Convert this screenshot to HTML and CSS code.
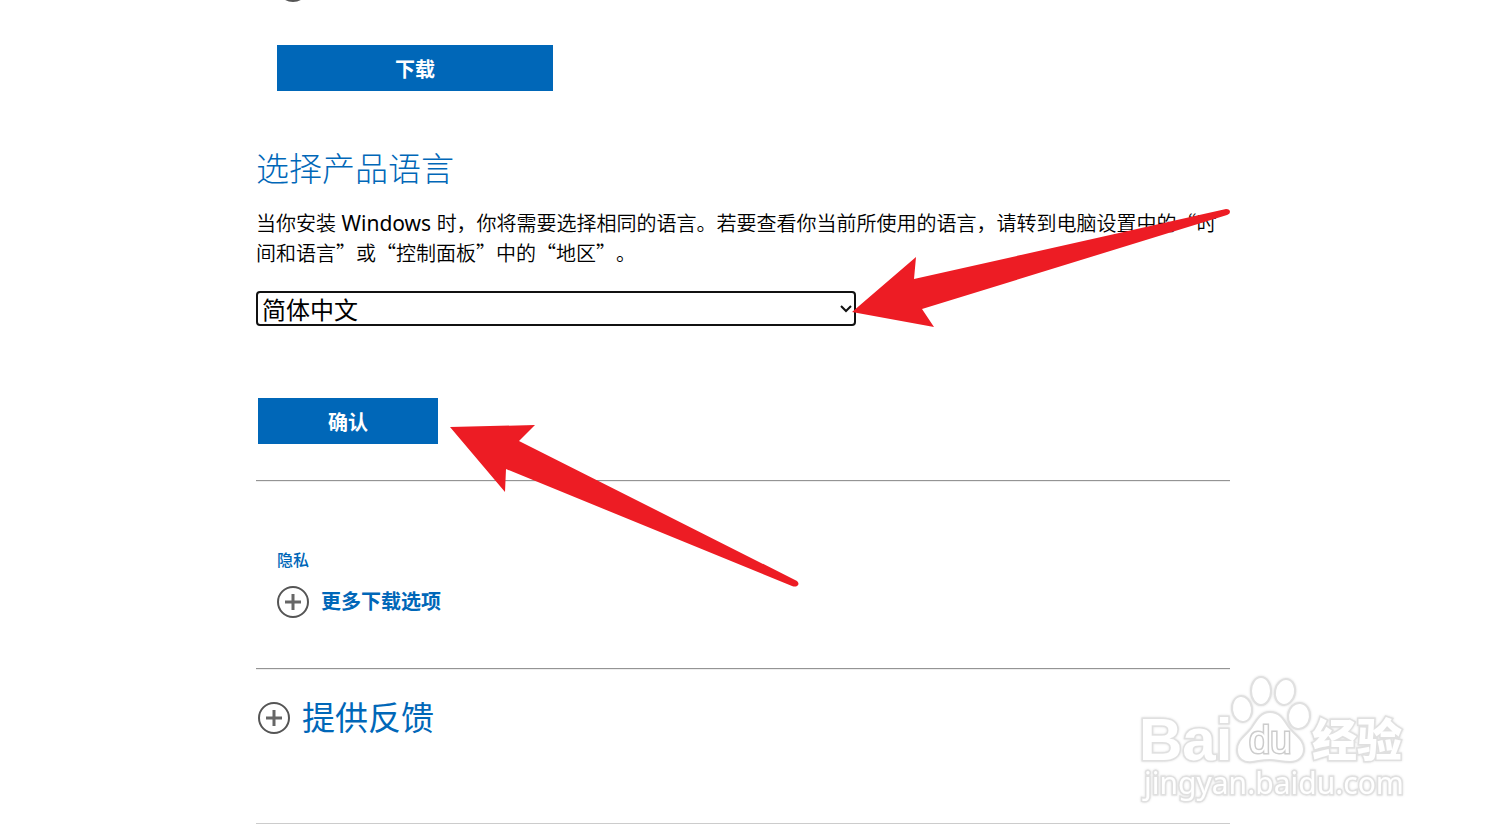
FILE: index.html
```
<!DOCTYPE html>
<html lang="zh-CN">

<head>
    <meta charset="UTF-8">
    <meta name="viewport" content="width=device-width, initial-scale=1.0">
    <title>选择产品语言</title>
    <link rel="stylesheet" href="styles.css">
</head>

<body>
    <main class="page">
        <section class="edition">
            <svg class="plus-icon" viewBox="0 0 32 32" aria-hidden="true">
                <circle cx="16" cy="16" r="15" />
                <path d="M16 8v16M8 16h16" />
            </svg>
            <button type="button" class="btn download-btn">下载</button>
        </section>

        <section class="language">
            <h2><label for="productLanguage">选择产品语言</label></h2>
            <p>当你安装<span class="latin"> Windows </span>时，你将需要选择相同的语言。若要查看你当前所使用的语言，请转到电脑设置中的“时间和语言”或“控制面板”中的“地区”。</p>
            <div class="select-box">
                <select id="productLanguage">
                    <option>简体中文</option>
                </select>
                <svg class="chevron" viewBox="0 0 12 8" aria-hidden="true">
                    <path d="M1 1l5 5l5 -5" />
                </svg>
            </div>
            <button type="button" class="btn confirm-btn">确认</button>
        </section>

        <hr>

        <section class="more">
            <a href="#" class="privacy-link">隐私</a>
            <button type="button" class="toggle">
                <svg class="plus-icon" viewBox="0 0 32 32" aria-hidden="true">
                    <circle cx="16" cy="16" r="15" />
                    <path d="M16 8v16M8 16h16" />
                </svg>
                <span>更多下载选项</span>
            </button>
        </section>

        <hr>

        <section class="feedback">
            <button type="button" class="toggle toggle-large">
                <svg class="plus-icon" viewBox="0 0 32 32" aria-hidden="true">
                    <circle cx="16" cy="16" r="15" />
                    <path d="M16 8v16M8 16h16" />
                </svg>
                <span>提供反馈</span>
            </button>
        </section>

        <hr class="hr-light">

        <!-- ARROWS -->
        <svg class="arrows" viewBox="0 0 974 400" aria-hidden="true">
            <path d="M596 112L660 57L658 79L970 9Q974 9 974 12Q974 14 971 15L666 109L678 127Z" />
            <path d="M194 227L279 225L263 241L541 381Q544 384 541 386Q539 387 536 386L250 269L249 292Z" />
        </svg>
    </main>

    <!-- WATERMARK -->
    <svg class="watermark" viewBox="0 0 280 140" aria-hidden="true">
        <text class="mark-bai" x="9" y="90">Bai</text>
        <ellipse cx="112" cy="39" rx="10" ry="13" transform="rotate(-8 112 39)" />
        <ellipse cx="131" cy="21" rx="10" ry="14" />
        <ellipse cx="155" cy="22" rx="10" ry="13" transform="rotate(12 155 22)" />
        <ellipse cx="169" cy="46" rx="11" ry="13" transform="rotate(6 169 46)" />
        <path d="M140 42C131 42 127 49 122 57C117 65 107 69 107 80C107 89 114 93 122 92C129 91 133 90 140 90C147 90 152 92 160 92C168 92 174 87 174 79C174 69 164 65 158 56C153 48 149 42 140 42Z" />
        <text class="mark-du" x="119" y="83">du</text>
        <text class="mark-jy" x="182" y="87">经验</text>
        <text class="mark-url" x="14" y="124">jingyan.baidu.com</text>
    </svg>
</body>

</html>
```

FILE: styles.css
```
body {
    margin: 0;
    background-color: #fff;
    color: #000;
    font-family: 'Noto Sans CJK SC', sans-serif;
    font-size: 20px;
    line-height: 30px;
    text-spacing-trim: space-all;
    position: relative;
    overflow-x: hidden;
}

.page {
    max-width: 974px;
    margin: 0 auto;
    position: relative;
    display: flow-root;
}

.plus-icon {
    width: 32px;
    height: 32px;
    flex-shrink: 0;
    fill: none;
    stroke: #555;
    stroke-width: 2;
}

.plus-icon path {
    stroke: #666;
    stroke-width: 3;
}

.btn {
    display: block;
    height: 46px;
    padding: 0;
    background-color: #0067b8;
    border: none;
    color: #fff;
    font-family: inherit;
    font-size: 20px;
    font-weight: 700;
    cursor: pointer;
}

.btn:hover {
    background-color: #005da6;
}

.edition {
    display: flex;
    flex-direction: column;
    gap: 43px;
    margin-top: -30px;
    padding-left: 21px;
}

.download-btn {
    width: 276px;
}

.language h2 {
    margin: 55px 0 19px;
    color: #0067b8;
    font-size: 33px;
    font-weight: 300;
    line-height: 43px;
}

.language p {
    margin: 0;
    font-weight: 350;
}

.latin {
    font-family: 'Noto Sans', sans-serif;
    font-size: 21px;
    font-weight: 400;
}

.select-box {
    position: relative;
    max-width: 600px;
    margin-top: 23px;
}

.select-box select {
    appearance: none;
    display: block;
    width: 100%;
    height: 35px;
    margin: 0;
    padding: 0 24px 0 4px;
    background-color: #fff;
    border: 2px solid #111;
    border-radius: 4px;
    color: #000;
    font-family: inherit;
    font-size: 24px;
    line-height: 31px;
}

.chevron {
    position: absolute;
    top: 14px;
    right: 4px;
    width: 12px;
    height: 8px;
    fill: none;
    stroke: #111;
    stroke-width: 2;
    pointer-events: none;
}

.confirm-btn {
    width: 180px;
    margin: 72px 0 36px 2px;
}

hr {
    height: 1px;
    margin: 0;
    border: none;
    border-top: 1px solid #949494;
    background-color: #eee;
}

.hr-light {
    height: 0;
    border-top-color: #ccc;
}

.more {
    display: flex;
    flex-direction: column;
    align-items: flex-start;
    gap: 17px;
    padding: 67px 21px 50px;
}

.privacy-link {
    color: #0067b8;
    font-size: 16px;
    font-weight: 500;
    line-height: 20px;
    text-decoration: none;
}

.privacy-link:hover {
    text-decoration: underline;
}

.toggle {
    display: flex;
    align-items: center;
    gap: 12px;
    height: 32px;
    padding: 0;
    background: none;
    border: none;
    color: #0067b8;
    font-family: inherit;
    font-size: 20px;
    font-weight: 700;
    cursor: pointer;
}

.toggle span {
    padding-bottom: 4px;
}

.toggle-large {
    font-size: 33px;
    font-weight: 400;
}

.feedback {
    padding: 32px 2px 89px;
}

/* ARROWS */
.arrows {
    position: absolute;
    top: 200px;
    left: 0;
    width: 974px;
    height: 400px;
    fill: #ed1c24;
    pointer-events: none;
}

/* WATERMARK */
.watermark {
    position: absolute;
    top: 670px;
    right: 76px;
    width: 280px;
    height: 140px;
    fill: #fff;
    stroke: #e0e0e0;
    stroke-width: 2;
    filter: drop-shadow(0 0 1px #ddd);
    pointer-events: none;
}

.watermark text {
    paint-order: stroke;
    stroke-width: 3;
}

.mark-bai {
    font-family: 'Liberation Sans', sans-serif;
    font-size: 60px;
    font-weight: 700;
}

.mark-du {
    font-family: 'Liberation Sans', sans-serif;
    font-size: 38px;
}

.watermark .mark-du {
    stroke: #ccc;
}

.mark-jy {
    font-size: 45px;
    font-weight: 900;
}

.mark-url {
    font-family: 'Noto Sans', sans-serif;
    font-size: 30px;
}
```
